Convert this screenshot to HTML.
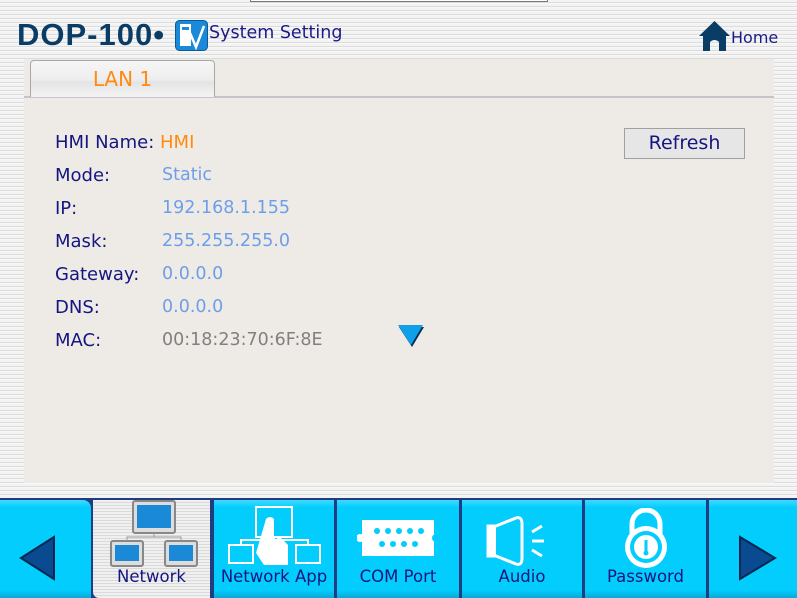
<!DOCTYPE html>
<html><head><meta charset="utf-8"><style>
*{margin:0;padding:0;box-sizing:border-box}
body{width:797px;height:598px;overflow:hidden;position:relative;font-family:"DejaVu Sans","Liberation Sans",sans-serif;
background:repeating-linear-gradient(180deg,#f3f3f3 0,#f3f3f3 2px,#dcdcdc 2px,#dcdcdc 3px,#f8f8f8 3px,#f8f8f8 4px);}
.abs{position:absolute}
.topbox{left:250px;top:-2px;width:298px;height:4px;border:1px solid #777;background:#fff}
.logo{left:17px;top:17px;font:bold 31px "Liberation Sans",sans-serif;color:#0a3d66;letter-spacing:1px}
.title{left:209px;top:23px;font-size:17.5px;color:#1a1a8a}
.home{left:731px;top:28px;font-size:16px;color:#1a1a8a}
.panel{left:24px;top:59px;width:750px;height:424px;background:#eeebe7}
.tabline{left:24px;top:96px;width:750px;height:2px;background:#c5c3cb}
.tab{left:30px;top:60px;width:185px;height:37px;border:1px solid #a8a8a8;border-bottom:none;border-radius:4px 4px 0 0;
background:linear-gradient(#f6f6f6,#eeeeee 50%,#e4e4e6 60%,#f4f4f4);color:#ff8a10;font-size:20px;text-align:center;line-height:36px}
.lab{left:55px;font-size:18px;color:#15157f}
.val{left:162px;font-size:17.5px;color:#6d9eea}
.refresh{left:624px;top:128px;width:121px;height:31px;border:1px solid #a0a0a0;background:#e6e6e6;color:#15157f;font-size:19px;text-align:center;line-height:29px}
.bar{left:0;top:498px;width:797px;height:100px;background:#1f3d80}
.btn{position:absolute;top:500px;height:98px;background:linear-gradient(#3fd9ff,#02cdfd 8%,#02cdfd 92%,#0aa8d8);color:#15157f;font-size:16.5px;text-align:center}
.btn span{position:absolute;left:0;right:0;top:67px}
</style></head><body>
<div class="abs topbox"></div>
<div class="abs logo">DOP-100•</div>
<svg class="abs" style="left:175px;top:20px" width="33" height="31" viewBox="0 0 33 31"><rect x="0.5" y="0.5" width="32" height="30" rx="4" fill="#1a8ad8" stroke="#0a5a9a"/><rect x="5" y="4" width="11" height="22" fill="#fff"/><rect x="7" y="7" width="7" height="3" fill="#1a8ad8"/><path d="M15 13 L21 27 L29 6" stroke="#fff" stroke-width="2.5" fill="none"/></svg>
<div class="abs title">System Setting</div>
<svg class="abs" style="left:698px;top:20px" width="33" height="32" viewBox="0 0 33 32"><path d="M16.5 1 L32 16 L28 16 L28 31 L21 31 L21 22 Q16.5 18 12 22 L12 31 L5 31 L5 16 L1 16 Z" fill="#0a3d66"/></svg>
<div class="abs home">Home</div>
<div class="abs panel"></div>
<div class="abs tabline"></div>
<div class="abs tab">LAN 1</div>
<div class="abs lab" style="top:132px">HMI Name: <span style="color:#ff8a10">HMI</span></div>
<div class="abs lab" style="top:165px">Mode:</div><div class="abs val" style="top:165px">Static</div>
<div class="abs lab" style="top:198px">IP:</div><div class="abs val" style="top:198px">192.168.1.155</div>
<div class="abs lab" style="top:231px">Mask:</div><div class="abs val" style="top:231px">255.255.255.0</div>
<div class="abs lab" style="top:264px">Gateway:</div><div class="abs val" style="top:264px">0.0.0.0</div>
<div class="abs lab" style="top:297px">DNS:</div><div class="abs val" style="top:297px">0.0.0.0</div>
<div class="abs lab" style="top:330px">MAC:</div><div class="abs val" style="top:330px;color:#808080">00:18:23:70:6F:8E</div>
<svg class="abs" style="left:398px;top:325px" width="28" height="24" viewBox="0 0 28 24"><path d="M1 2 L26 2 L14 22 Z" fill="#0a2a50"/><path d="M0 0 L25 0 L13 20 Z" fill="#0ea0e8"/></svg>
<div class="abs refresh">Refresh</div>
<div class="abs bar"></div>
<div class="btn" style="left:0;width:91px;border-radius:0 8px 0 0"><svg style="position:absolute;left:19px;top:35px" width="38" height="46" viewBox="0 0 38 46"><path d="M35 2 L2 23 L35 44 Z" fill="#0a4a90" stroke="#062850" stroke-width="2"/></svg></div>
<div class="btn" style="left:93px;width:117px;background:repeating-linear-gradient(180deg,#f0f0f0 0,#f0f0f0 2px,#dadada 2px,#dadada 3px);border-radius:0 0 0 6px">
<svg style="position:absolute;left:16px;top:0" width="90" height="70" viewBox="0 0 90 70"><g stroke="#888" stroke-width="2" fill="#ddd"><rect x="24" y="1" width="42" height="32" rx="2"/><rect x="2" y="41" width="32" height="25" rx="2"/><rect x="56" y="41" width="32" height="25" rx="2"/></g><rect x="28" y="5" width="34" height="23" fill="#1a8ad8"/><rect x="6" y="45" width="24" height="16" fill="#1a8ad8"/><rect x="60" y="45" width="24" height="16" fill="#1a8ad8"/><path d="M45 33 V37 M18 41 V37 H72 V41" stroke="#999" fill="none"/></svg>
<span>Network</span></div>
<div class="btn" style="left:214px;width:120px"><svg style="position:absolute;left:12px;top:5px" width="98" height="62" viewBox="0 0 98 62"><g stroke="#fff" stroke-width="2" fill="none"><rect x="30" y="2" width="36" height="30"/><rect x="3" y="40" width="24" height="18"/><rect x="70" y="40" width="24" height="18"/><path d="M15 40 V35 H82 V40 M48 32 V35"/></g><path d="M40 14 Q44 10 48 14 V35 L54 32 L62 40 V60 H38 L30 48 Z" fill="#fff"/></svg><span>Network App</span></div>
<div class="btn" style="left:337px;width:122px"><svg style="position:absolute;left:20px;top:18px" width="82" height="40" viewBox="0 0 82 40"><path d="M5 2 H77 V38 H5 Z" fill="#fff"/><circle cx="3" cy="20" r="4" fill="#fff"/><circle cx="79" cy="20" r="4" fill="#02cdfd"/><g fill="#02cdfd"><circle cx="20" cy="13" r="3"/><circle cx="31" cy="13" r="3"/><circle cx="42" cy="13" r="3"/><circle cx="53" cy="13" r="3"/><circle cx="64" cy="13" r="3"/><circle cx="25" cy="26" r="3"/><circle cx="36" cy="26" r="3"/><circle cx="47" cy="26" r="3"/><circle cx="58" cy="26" r="3"/></g></svg><span>COM Port</span></div>
<div class="btn" style="left:462px;width:120px"><svg style="position:absolute;left:24px;top:16px" width="70" height="50" viewBox="0 0 70 50"><path d="M2 10 H10 L30 2 Q36 0 36 8 V42 Q36 50 30 48 L10 40 H2 Z" fill="none" stroke="#fff" stroke-width="3"/><path d="M2 10 H10 V40 H2 Z" fill="#fff"/><path d="M46 16 L56 10 M46 25 H58 M46 34 L56 40" stroke="#fff" stroke-width="3"/></svg><span>Audio</span></div>
<div class="btn" style="left:585px;width:121px"><svg style="position:absolute;left:38px;top:8px" width="46" height="62" viewBox="0 0 46 62"><path d="M9 30 V16 A14 14 0 0 1 37 16 V30" stroke="#fff" stroke-width="5" fill="none"/><circle cx="23" cy="39" r="21" fill="#fff"/><circle cx="23" cy="39" r="16" fill="#02cdfd"/><circle cx="23" cy="39" r="12" fill="#fff"/><path d="M23 32 V47" stroke="#02cdfd" stroke-width="3"/><circle cx="23" cy="45" r="2.5" fill="#02cdfd"/></svg><span>Password</span></div>
<div class="btn" style="left:709px;width:88px"><svg style="position:absolute;left:29px;top:35px" width="40" height="46" viewBox="0 0 40 46"><path d="M2 2 L37 23 L2 44 Z" fill="#0a4a90" stroke="#062850" stroke-width="2"/></svg></div>
</body></html>
